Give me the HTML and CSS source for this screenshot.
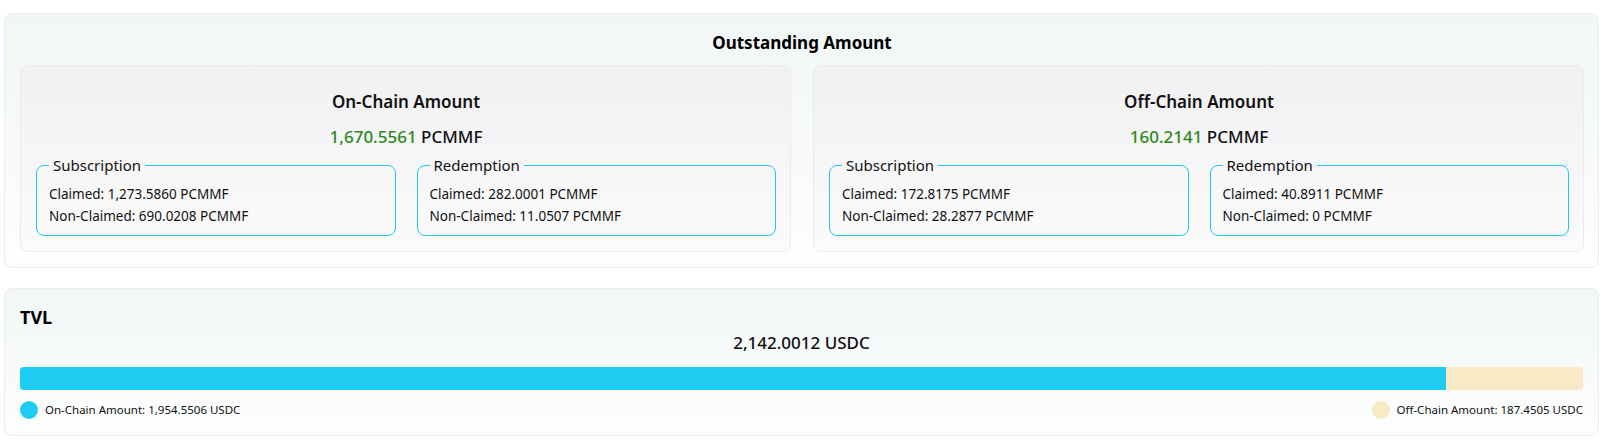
FILE: index.html
```html
<!DOCTYPE html>
<html lang="en">
<head>
<meta charset="utf-8">
<title>Outstanding Amount</title>
<link rel="stylesheet" href="styles.css">
</head>
<body>
<div class="page">
  <section class="card outstanding">
    <h2 class="card-title">Outstanding Amount</h2>
    <div class="chains">
      <div class="chain">
        <h3 class="chain-title">On-Chain Amount</h3>
        <div class="chain-amount"><span class="num">1,670.5561</span> PCMMF</div>
        <div class="groups">
          <fieldset class="group">
            <legend>Subscription</legend>
            <div class="line">Claimed: 1,273.5860 PCMMF</div>
            <div class="line">Non-Claimed: 690.0208 PCMMF</div>
          </fieldset>
          <fieldset class="group">
            <legend>Redemption</legend>
            <div class="line">Claimed: 282.0001 PCMMF</div>
            <div class="line">Non-Claimed: 11.0507 PCMMF</div>
          </fieldset>
        </div>
      </div>
      <div class="chain">
        <h3 class="chain-title">Off-Chain Amount</h3>
        <div class="chain-amount"><span class="num">160.2141</span> PCMMF</div>
        <div class="groups">
          <fieldset class="group">
            <legend>Subscription</legend>
            <div class="line">Claimed: 172.8175 PCMMF</div>
            <div class="line">Non-Claimed: 28.2877 PCMMF</div>
          </fieldset>
          <fieldset class="group">
            <legend>Redemption</legend>
            <div class="line">Claimed: 40.8911 PCMMF</div>
            <div class="line">Non-Claimed: 0 PCMMF</div>
          </fieldset>
        </div>
      </div>
    </div>
  </section>

  <section class="card tvl">
    <h2 class="tvl-title">TVL</h2>
    <div class="tvl-total">2,142.0012 USDC</div>
    <div class="bar">
      <div class="bar-on" style="width: 91.25%"></div>
      <div class="bar-off"></div>
    </div>
    <div class="legend">
      <div class="legend-item"><span class="dot dot-on"></span>On-Chain Amount: 1,954.5506 USDC</div>
      <div class="legend-item"><span class="dot dot-off"></span>Off-Chain Amount: 187.4505 USDC</div>
    </div>
  </section>
</div>
</body>
</html>
```

FILE: styles.css
```css
* { box-sizing: border-box; }
html, body { margin: 0; padding: 0; background: #ffffff; }
body {
  font-family: "Noto Sans", "Open Sans", "Liberation Sans", sans-serif;
  color: #111111;
}
.page {
  padding: 13px 5px 0 4px;
  display: flex;
  flex-direction: column;
  gap: 20px;
}
.card {
  border: 1px solid #eaeded;
  border-radius: 8px;
  background: linear-gradient(180deg, #f2f6f6 0%, #fdfefe 100%);
}
.outstanding {
  padding: 17px 14px 15px 15px;
}
.card-title {
  margin: 0 0 10px;
  text-align: center;
  font-size: 17px;
  line-height: 24px;
  font-weight: 700;
  color: #000;
}
.chains {
  display: grid;
  grid-template-columns: 1fr 1fr;
  gap: 22px;
}
.chain {
  border: 1px solid #eceaee;
  border-radius: 8px;
  background: linear-gradient(180deg, #f1f0f3 0%, #fbfbfb 100%);
  padding: 24px 14px 15px 15px;
}
.chain-title {
  margin: 0;
  text-align: center;
  font-size: 17px;
  line-height: 24px;
  font-weight: 600;
}
.chain-amount {
  margin-top: 11px;
  text-align: center;
  font-size: 17px;
  line-height: 24px;
  font-weight: 500;
}
.chain-amount .num { color: #2f8a1c; }
.groups {
  margin-top: 6px;
  display: grid;
  grid-template-columns: 1fr 1fr;
  gap: 21px;
}
.group {
  margin: 0;
  min-width: 0;
  border: 1px solid #22c8ee;
  border-radius: 8px;
  padding: 8px 12px 8px 12px;
}
.group legend {
  padding: 0 4px;
  font-size: 15px;
  line-height: 20px;
}
.line {
  font-size: 13.5px;
  line-height: 22px;
}
.tvl {
  padding: 16px 15px 16px 15px;
}
.tvl-title {
  margin: 0;
  font-size: 18px;
  line-height: 24px;
  font-weight: 700;
  color: #000;
}
.tvl-total {
  margin-top: 2px;
  text-align: center;
  font-size: 17px;
  line-height: 24px;
  font-weight: 500;
}
.bar {
  margin-top: 12px;
  height: 23px;
  display: flex;
  border-radius: 4px;
  overflow: hidden;
  background: #f8eac4;
}
.bar-on { background: #1ecbf1; height: 100%; }
.bar-off { flex: 1; background: #f8eac4; height: 100%; }
.legend {
  margin-top: 11px;
  display: flex;
  justify-content: space-between;
  align-items: center;
}
.legend-item {
  display: flex;
  align-items: center;
  gap: 7px;
  font-size: 11.5px;
  line-height: 18px;
}
.dot {
  width: 18px;
  height: 18px;
  border-radius: 50%;
  display: inline-block;
}
.dot-on { background: #1ecbf1; }
.dot-off { background: #f8eac4; }
```
